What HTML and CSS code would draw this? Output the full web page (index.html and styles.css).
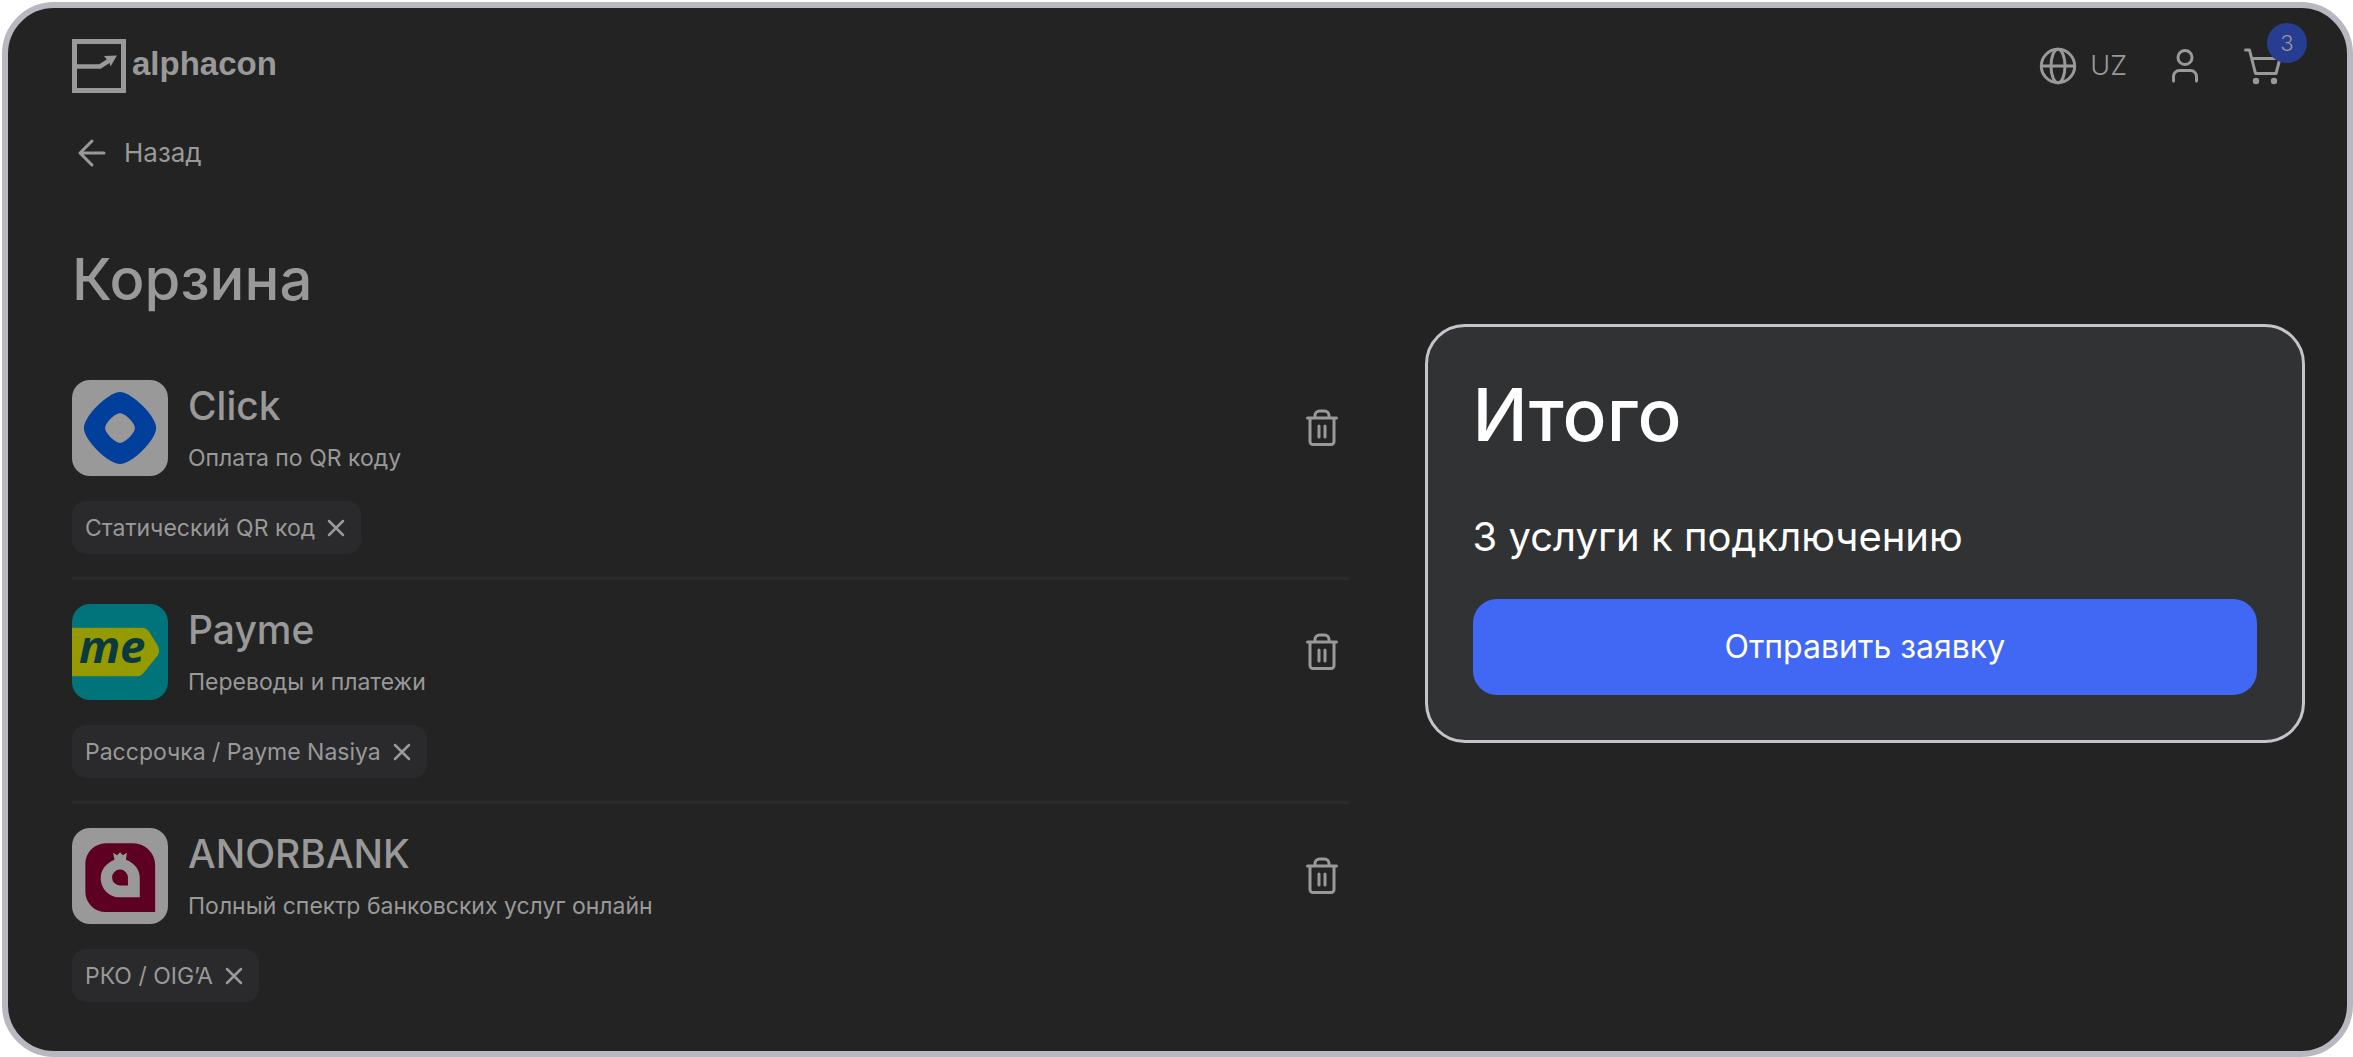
FILE: index.html
```
<!DOCTYPE html>
<html lang="ru">
<head>
    <meta charset="UTF-8">
    <meta name="viewport" content="width=device-width, initial-scale=1.0">
    <title>Корзина</title>
    <link rel="stylesheet" href="styles.css">
</head>
<body>
    <div class="page">
        <header class="header">
            <a href="#" class="logo">
                <svg class="logo-mark" viewBox="0 0 54 54">
                    <rect x="2.5" y="2.5" width="49" height="49" fill="none" stroke="currentColor" stroke-width="5"/>
                    <path d="M4 27.500H28L38 21" fill="none" stroke="currentColor" stroke-width="4.500"/>
                    <path d="M32 17L45 16.500L38.500 27.500L37.500 23.500L34.500 20Z" fill="currentColor"/>
                </svg>
                <span>alphacon</span>
            </a>
            <nav class="actions">
                <button type="button" class="lang">
                    <svg width="38" height="38" viewBox="0 0 38 38" fill="none" stroke="currentColor" stroke-width="3">
                        <circle cx="19" cy="19" r="16.700"/>
                        <ellipse cx="19" cy="19" rx="7" ry="16.700"/>
                        <path d="M2.500 19h33"/>
                    </svg>
                    <span>UZ</span>
                </button>
                <a href="#" class="action" aria-label="Профиль">
                    <svg width="32" height="36" viewBox="0 0 32 36" fill="none" stroke="currentColor" stroke-width="3" stroke-linecap="round">
                        <circle cx="16" cy="9.500" r="7"/>
                        <path d="M4.500 33v-4.500a6 6 0 0 1 6-6h11a6 6 0 0 1 6 6V33"/>
                    </svg>
                </a>
                <a href="#" class="action cart" aria-label="Корзина">
                    <svg width="40" height="38" viewBox="0 0 40 38" fill="none" stroke="currentColor" stroke-width="3" stroke-linecap="round" stroke-linejoin="round">
                        <path d="M2.500 3h4l6 23.500h20.500l4-15H9"/>
                        <circle cx="13" cy="34" r="3.200" fill="currentColor" stroke="none"/>
                        <circle cx="31" cy="34" r="3.200" fill="currentColor" stroke="none"/>
                    </svg>
                    <span class="badge">3</span>
                </a>
            </nav>
        </header>

        <a href="#" class="back">
            <svg width="30" height="30" viewBox="0 0 30 30" fill="none" stroke="currentColor" stroke-width="3" stroke-linecap="round" stroke-linejoin="round">
                <path d="M27 15H3M15 3L3 15l12 12"/>
            </svg>
            <span>Назад</span>
        </a>

        <main class="content">
            <section>
                <h1>Корзина</h1>
                <ul class="items">
                    <li class="item">
                        <div class="item-row">
                            <svg class="item-logo" viewBox="0 0 97 97">
                                <rect width="97" height="97" fill="#999999"/>
                                <path d="M48.500 12C60 12 85 36 85 48.500S60 85 48.500 85S12 61 12 48.500S37 12 48.500 12Z" fill="#003f9b"/>
                                <path d="M48.500 33.500C53.500 33.500 63.500 43 63.500 48.500S53.500 63.500 48.500 63.500S33.500 54 33.500 48.500S43.500 33.500 48.500 33.500Z" fill="#999999"/>
                            </svg>
                            <div class="item-text">
                                <h2>Click</h2>
                                <p>Оплата по QR коду</p>
                            </div>
                            <button type="button" class="delete" aria-label="Удалить">
                                <svg width="34" height="38" viewBox="0 0 34 38" fill="none" stroke="currentColor" stroke-width="3" stroke-linecap="round" stroke-linejoin="round">
                                    <path d="M2.500 9h29M5 9v23.500a3 3 0 0 0 3 3h18a3 3 0 0 0 3-3V9M10 9V6.500a4.500 4.500 0 0 1 4.500-4.500h5a4.500 4.500 0 0 1 4.500 4.500V9M14 17v11M20 17v11"/>
                                </svg>
                            </button>
                        </div>
                        <div class="chip">
                            <span>Статический QR код</span>
                            <button type="button" class="chip-remove" aria-label="Убрать">
                                <svg width="24" height="24" viewBox="0 0 24 24" stroke="currentColor" stroke-width="2.500" stroke-linecap="round">
                                    <path d="M5 5l14 14M19 5L5 19"/>
                                </svg>
                            </button>
                        </div>
                    </li>
                    <li class="item">
                        <div class="item-row">
                            <svg class="item-logo" viewBox="0 0 97 97">
                                <rect width="97" height="97" fill="#00747a"/>
                                <path d="M0 24H71Q75 24 78 28L86.500 42Q89.500 47.500 86.500 52L73 69Q70 73 66 73H0Z" fill="#959a00"/>
                                <text class="me" x="7" y="60">me</text>
                            </svg>
                            <div class="item-text">
                                <h2>Payme</h2>
                                <p>Переводы и платежи</p>
                            </div>
                            <button type="button" class="delete" aria-label="Удалить">
                                <svg width="34" height="38" viewBox="0 0 34 38" fill="none" stroke="currentColor" stroke-width="3" stroke-linecap="round" stroke-linejoin="round">
                                    <path d="M2.500 9h29M5 9v23.500a3 3 0 0 0 3 3h18a3 3 0 0 0 3-3V9M10 9V6.500a4.500 4.500 0 0 1 4.500-4.500h5a4.500 4.500 0 0 1 4.500 4.500V9M14 17v11M20 17v11"/>
                                </svg>
                            </button>
                        </div>
                        <div class="chip">
                            <span>Рассрочка / Payme Nasiya</span>
                            <button type="button" class="chip-remove" aria-label="Убрать">
                                <svg width="24" height="24" viewBox="0 0 24 24" stroke="currentColor" stroke-width="2.500" stroke-linecap="round">
                                    <path d="M5 5l14 14M19 5L5 19"/>
                                </svg>
                            </button>
                        </div>
                    </li>
                    <li class="item">
                        <div class="item-row">
                            <svg class="item-logo" viewBox="0 0 97 97">
                                <rect width="97" height="97" fill="#999999"/>
                                <path d="M34 15.500H62A22 22 0 0 1 84 37.500V85H34A20.500 20.500 0 0 1 13.500 64.500V36A20.500 20.500 0 0 1 34 15.500Z" fill="#5e0022"/>
                                <path d="M43 32L41.500 25L45.500 27.500L48.500 24.500L51.500 27.500L55.500 25L54.500 32C63 35 68.500 42 68.500 50.500V70H48.500C37 70 29 61 29 50.500C29 42 35 35 43 32Z" fill="#999999"/>
                                <path d="M48.500 42A8 8 0 0 1 56.500 50V58H48.500A8 8 0 0 1 48.500 42Z" fill="#5e0022"/>
                            </svg>
                            <div class="item-text">
                                <h2>ANORBANK</h2>
                                <p>Полный спектр банковских услуг онлайн</p>
                            </div>
                            <button type="button" class="delete" aria-label="Удалить">
                                <svg width="34" height="38" viewBox="0 0 34 38" fill="none" stroke="currentColor" stroke-width="3" stroke-linecap="round" stroke-linejoin="round">
                                    <path d="M2.500 9h29M5 9v23.500a3 3 0 0 0 3 3h18a3 3 0 0 0 3-3V9M10 9V6.500a4.500 4.500 0 0 1 4.500-4.500h5a4.500 4.500 0 0 1 4.500 4.500V9M14 17v11M20 17v11"/>
                                </svg>
                            </button>
                        </div>
                        <div class="chip">
                            <span>РКО / OIG’A</span>
                            <button type="button" class="chip-remove" aria-label="Убрать">
                                <svg width="24" height="24" viewBox="0 0 24 24" stroke="currentColor" stroke-width="2.500" stroke-linecap="round">
                                    <path d="M5 5l14 14M19 5L5 19"/>
                                </svg>
                            </button>
                        </div>
                    </li>
                </ul>
            </section>

            <aside class="summary">
                <h2>Итого</h2>
                <p>3 услуги к подключению</p>
                <button type="button" class="submit">Отправить заявку</button>
            </aside>
        </main>
    </div>
</body>
</html>
```
FILE: styles.css
```
* {
    box-sizing: border-box;
    margin: 0;
    padding: 0;
}

body {
    font-family: Inter, "Liberation Sans", sans-serif;
    background-color: #ffffff;
    color: #999999;
    min-height: 100vh;
    padding: 2px 0 0 2px;
    display: flex;
}

a {
    color: inherit;
    text-decoration: none;
}

button {
    font-family: inherit;
    color: inherit;
    background: none;
    border: none;
    cursor: pointer;
}

svg {
    display: block;
    flex: none;
}

.page {
    flex: 1;
    background-color: #232323;
    border: 6px solid #b9b8c0;
    border-radius: 52px;
    padding: 31px 42px 24px 64px;
}

.header {
    display: flex;
    justify-content: space-between;
    align-items: center;
}

.logo {
    display: flex;
    gap: 6px;
    font-family: "Liberation Sans", Arial, sans-serif;
    font-size: 33px;
    line-height: 50px;
    font-weight: bold;
}

.logo-mark {
    width: 54px;
    height: 54px;
}

.actions {
    display: flex;
    align-items: center;
    gap: 42px;
    padding-right: 22px;
}

.lang {
    display: flex;
    align-items: center;
    gap: 13px;
    font-size: 27px;
    line-height: 32px;
    font-weight: 300;
}

.cart {
    position: relative;
}

.badge {
    position: absolute;
    top: -24px;
    right: -24px;
    width: 40px;
    height: 40px;
    border-radius: 50%;
    background-color: #263d92;
    font-size: 22px;
    line-height: 40px;
    font-weight: 300;
    text-align: center;
}

.back {
    display: flex;
    width: fit-content;
    align-items: center;
    gap: 17px;
    margin-top: 44px;
    padding-left: 5px;
    font-size: 26px;
    line-height: 32px;
}

.content {
    display: grid;
    grid-template-columns: 29fr 20fr;
    gap: 76px;
    align-items: start;
    margin-top: 74px;
}

h1 {
    font-size: 58px;
    line-height: 72px;
    font-weight: 500;
    margin-bottom: 65px;
}

.items {
    list-style: none;
}

.item + .item {
    border-top: 3px solid #2a2a2d;
    margin-top: 23px;
    padding-top: 24px;
}

.item-row {
    display: flex;
    align-items: center;
    gap: 20px;
    padding-right: 10px;
    margin-bottom: 25px;
}

.item-logo {
    width: 96px;
    height: 96px;
    border-radius: 18px;
}

.me {
    font-family: "Open Sans", sans-serif;
    font-size: 46px;
    font-weight: bold;
    font-style: italic;
    fill: #0b3940;
}

.item-text {
    flex: 1;
}

.item-text h2 {
    font-size: 39px;
    line-height: 48px;
    font-weight: 500;
    margin-bottom: 12px;
}

.item-text p {
    font-size: 23px;
    line-height: 32px;
}

.chip {
    display: flex;
    width: fit-content;
    align-items: center;
    gap: 9px;
    height: 53px;
    padding: 0 13px;
    border-radius: 14px;
    background-color: #2a2a2c;
    font-size: 23px;
    line-height: 32px;
}

.summary {
    margin-top: 81px;
    padding: 52px 45px 45px;
    background-color: #303233;
    border: 3px solid #c5c4ca;
    border-radius: 40px;
    color: #ffffff;
}

.summary h2 {
    font-size: 73px;
    line-height: 72px;
    font-weight: 500;
}

.summary p {
    font-size: 40px;
    line-height: 48px;
    margin: 62px 0 38px;
}

.submit {
    width: 100%;
    height: 96px;
    border-radius: 24px;
    background-color: #4068f4;
    font-size: 32px;
    line-height: 40px;
}
```
